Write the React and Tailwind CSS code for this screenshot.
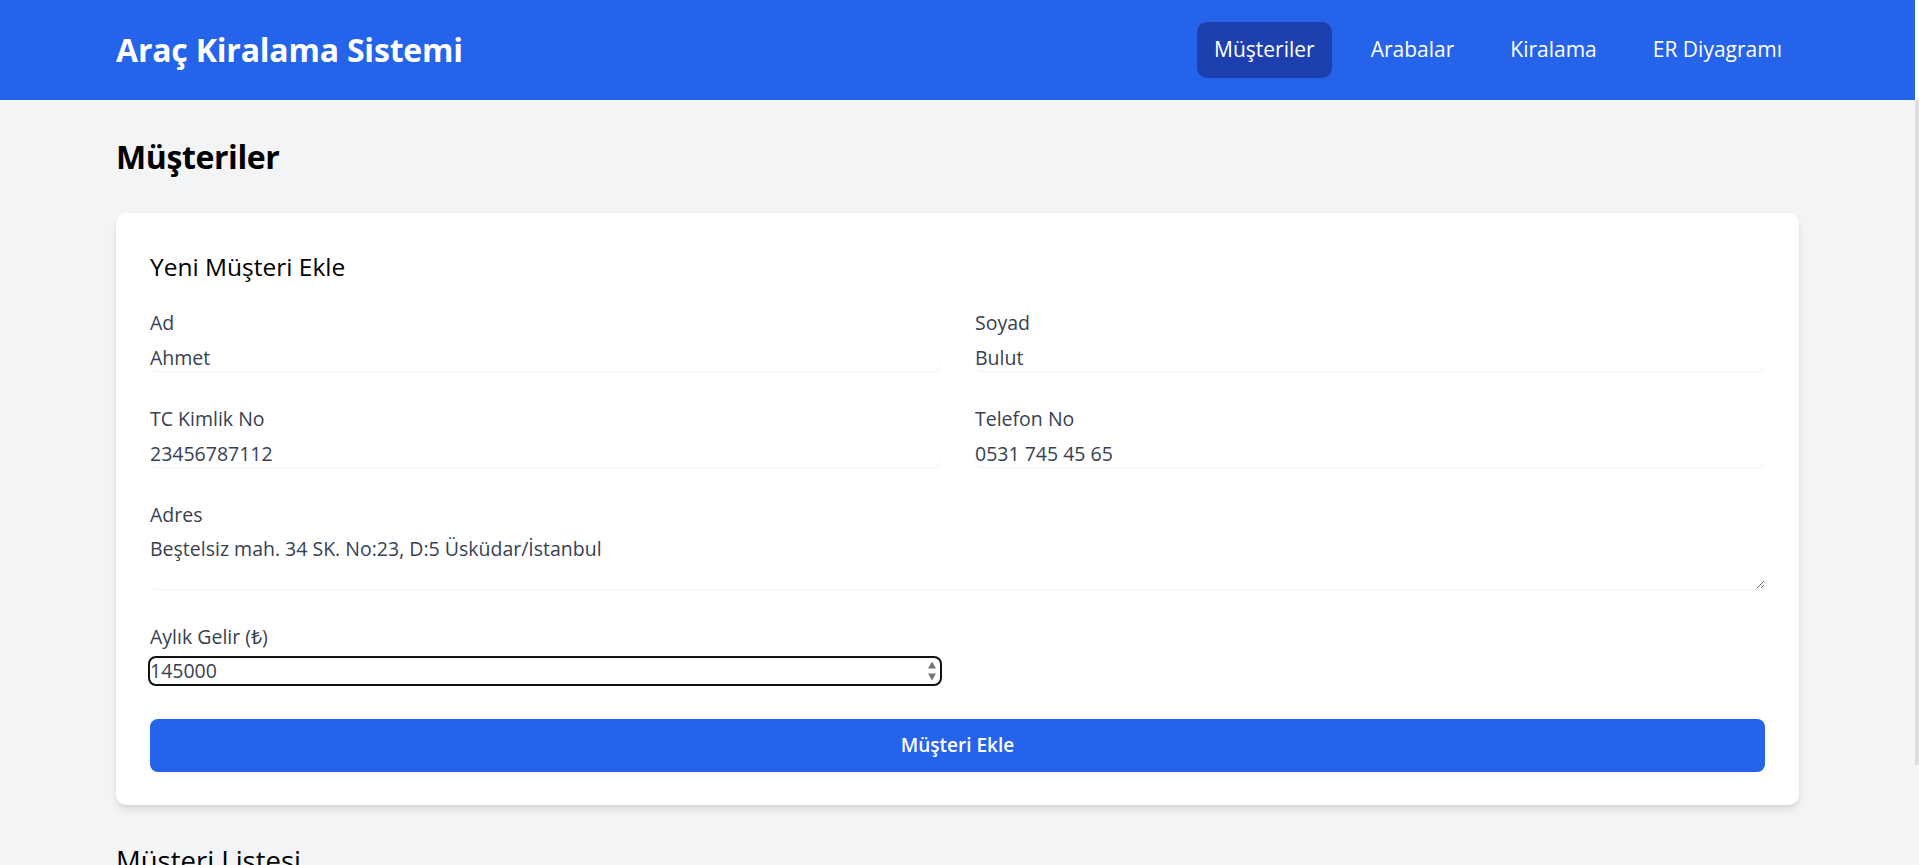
import { useState } from "react";

const navItems = ["Müşteriler", "Arabalar", "Kiralama", "ER Diyagramı"];

const Field = ({ label, value, className = "" }) => (
  <div className={className}>
    <label className="block text-[19.5px] leading-[30px] text-[#374151] mb-[6px]">{label}</label>
    <input
      type="text"
      defaultValue={value}
      className="block w-full h-[27px] leading-[27px] text-[19.5px] text-[#374151] rounded-[7px] shadow-[0_1px_2px_0_rgba(0,0,0,0.06)] focus:outline-none"
    />
  </div>
);

const App = () => {
  const [active] = useState("Müşteriler");

  return (
    <div className="flex min-h-screen bg-[#f3f4f6] font-['Open_Sans',sans-serif]">
      <div className="flex-1">
        {/* Header */}
        <header className="bg-[#2563eb] h-[100px]">
          <div className="mx-auto w-[1683px] h-full flex items-center justify-between">
            <h1 className="text-white font-bold text-[32px] tracking-[-0.2px]">Araç Kiralama Sistemi</h1>
            <nav className="flex items-center gap-[22px]">
              {navItems.map((item) => (
                <a
                  key={item}
                  className={
                    item === active
                      ? "h-[56px] px-[17px] flex items-center rounded-[10px] bg-[#1e40af] text-white text-[21px]"
                      : "h-[56px] px-[17px] flex items-center rounded-[10px] text-white text-[21px]"
                  }
                >
                  {item}
                </a>
              ))}
            </nav>
          </div>
        </header>

        <main className="mx-auto w-[1683px] pt-[34px]">
          <h2 className="text-[32px] leading-[45px] font-bold text-black mb-[34px] tracking-[-0.4px]">Müşteriler</h2>

          {/* Form card */}
          <div className="bg-white rounded-[10px] shadow-[0_5px_8px_-1px_rgba(0,0,0,0.1),0_2px_5px_-2px_rgba(0,0,0,0.1)] px-[34px] pt-[36px] pb-[33px]">
            <h3 className="text-[24.5px] leading-[35px] font-medium text-black mb-[24px]">Yeni Müşteri Ekle</h3>
            <form className="grid grid-cols-2 gap-x-[35px] gap-y-[33px]" onSubmit={(e) => e.preventDefault()}>
              <Field label="Ad" value="Ahmet" />
              <Field label="Soyad" value="Bulut" />
              <Field label="TC Kimlik No" value="23456787112" />
              <Field label="Telefon No" value="0531 745 45 65" />

              <div className="col-span-2">
                <label className="block text-[19.5px] leading-[30px] text-[#374151] mb-[6px]">Adres</label>
                <textarea
                  rows={2}
                  defaultValue="Beştelsiz mah. 34 SK. No:23, D:5 Üsküdar/İstanbul"
                  className="block w-full h-[53px] leading-[26.5px] text-[19.5px] text-[#374151] rounded-[7px] shadow-[0_1px_2px_0_rgba(0,0,0,0.06)] focus:outline-none"
                />
              </div>

              <div>
                <label className="block text-[19.5px] leading-[30px] text-[#374151] mb-[6px]">Aylık Gelir (₺)</label>
                <div className="relative">
                  <input
                    type="text"
                    defaultValue="145000"
                    className="block w-full h-[26px] leading-[26px] text-[19.5px] text-[#374151] rounded-[6px] outline-2 outline-solid outline-[#101010]"
                  />
                  {/* number spinner */}
                  <svg className="absolute right-[3px] top-[2px]" width="10" height="22" viewBox="0 0 10 22">
                    <path d="M5 1.5 L9 8.5 L1 8.5 Z" fill="#767676" />
                    <path d="M5 20.5 L9 13.5 L1 13.5 Z" fill="#767676" />
                  </svg>
                </div>
              </div>

              <button
                type="submit"
                className="col-span-2 mt-[2px] h-[53px] rounded-[8px] bg-[#2563eb] text-white text-[19px] font-semibold"
              >
                Müşteri Ekle
              </button>
            </form>
          </div>

          <h3 className="mt-[36px] text-[27.5px] leading-[40px] font-medium text-black">Müşteri Listesi</h3>
          <div className="mt-[20px] h-[300px]" />
        </main>
      </div>

      {/* scrollbar strip */}
      <div className="w-[4px] bg-[#f3f4f6] flex flex-col">
        <div className="h-[100px] bg-white" />
        <div className="h-[665px] bg-[#dedede]" />
      </div>
    </div>
  );
};

export default App;
